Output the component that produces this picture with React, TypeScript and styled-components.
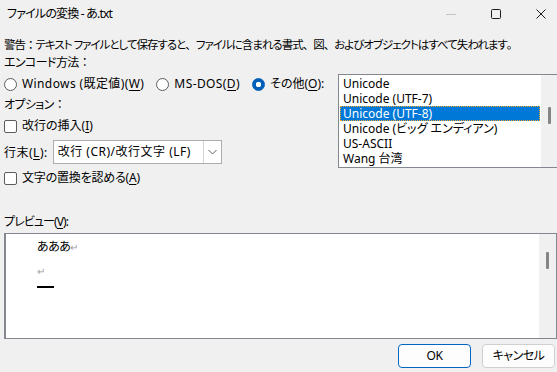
import React from 'react';
import styled, { createGlobalStyle } from 'styled-components';

const GlobalStyle = createGlobalStyle`
  html, body {
    margin: 0;
    padding: 0;
    background: #f0f0f0;
  }
`;

const Window = styled.div`
  width: 557px;
  height: 372px;
  overflow: hidden;
  background: #f0f0f0;
  color: #000;
  font-family: 'Noto Sans', 'Noto Sans CJK JP', sans-serif;
  font-size: 12px;
  font-feature-settings: 'palt';
  display: flex;
  flex-direction: column;
`;

const TitleBar = styled.div`
  height: 28px;
  flex: none;
  display: flex;
  align-items: center;
  justify-content: space-between;
  padding-left: 7px;
`;

const Title = styled.div`
  line-height: 16px;
  letter-spacing: -0.8px;
`;

const Controls = styled.div`
  display: flex;
  margin-right: -6px;
  height: 28px;
`;

const ControlButton = styled.div<{ $disabled?: boolean }>`
  width: 45px;
  height: 28px;
  display: flex;
  align-items: center;
  justify-content: center;
  color: ${(p) => (p.$disabled ? '#c4c4c4' : '#1a1a1a')};
`;

const Body = styled.div`
  flex: 1;
  display: flex;
  flex-direction: column;
  padding-left: 4px;
`;

const Line = styled.div<{ $top?: number; $tight?: number; $size?: number }>`
  line-height: 16px;
  height: 16px;
  flex: none;
  white-space: nowrap;
  margin-top: ${(p) => p.$top ?? 0}px;
  letter-spacing: ${(p) => p.$tight ?? -0.6}px;
  font-size: ${(p) => p.$size ?? 12}px;
`;

/* full-width punctuation: Yu Gothic UI keeps these wide while kana are proportional */
const Wide = styled.span`
  font-feature-settings: normal;
`;

const Key = styled.span`
  text-decoration: underline;
  text-underline-offset: 2px;
`;

const EncodingRow = styled.div`
  display: flex;
  margin-top: 3px;
`;

const LeftColumn = styled.div`
  width: 334px;
  flex: none;
  display: flex;
  flex-direction: column;
  padding-top: 2px;
`;

const RadioRow = styled.div`
  display: flex;
  align-items: center;
  gap: 12px;
  height: 16px;
`;

const Option = styled.label`
  display: flex;
  align-items: center;
  gap: 5px;
  height: 16px;
  line-height: 16px;
  white-space: nowrap;
`;

const OptionText = styled.span<{ $tight?: number }>`
  letter-spacing: ${(p) => p.$tight ?? 0}px;
`;

const RadioCircle = styled.span<{ $checked?: boolean }>`
  width: 13px;
  height: 13px;
  box-sizing: border-box;
  border-radius: 50%;
  border: 1px solid ${(p) => (p.$checked ? '#005fb8' : '#5c5c5c')};
  background: ${(p) =>
    p.$checked
      ? 'radial-gradient(circle, #fff 0 2.5px, #005fb8 3px)'
      : '#fff'};
  flex: none;
`;

const CheckRow = styled.div<{ $top: number }>`
  display: flex;
  margin-top: ${(p) => p.$top}px;
  height: 16px;
`;

const CheckBox = styled.span`
  width: 13px;
  height: 13px;
  box-sizing: border-box;
  border-radius: 2px;
  border: 1px solid #5c5c5c;
  background: #fff;
  flex: none;
`;

const EolRow = styled.div`
  display: flex;
  align-items: center;
  gap: 5px;
  margin-top: 6px;
  height: 24px;
  white-space: nowrap;
`;

const EolLabel = styled.span`
  letter-spacing: 0.5px;
`;

const Combo = styled.div`
  width: 169px;
  height: 24px;
  box-sizing: border-box;
  border: 1px solid #adadad;
  background: #fff;
  display: flex;
  align-items: center;
`;

const ComboText = styled.div`
  flex: 1;
  padding-left: 4px;
  line-height: 16px;
  letter-spacing: 0.5px;
`;

const ComboArrow = styled.div`
  width: 17px;
  height: 22px;
  border-left: 1px solid #d5d5d5;
  background: #fff;
  display: flex;
  align-items: center;
  justify-content: center;
`;

const ListBox = styled.div`
  width: 221px;
  height: 94px;
  box-sizing: border-box;
  border: 1px solid #828790;
  background: #fff;
  display: flex;
  flex: none;
`;

const ListItems = styled.div`
  flex: 1;
  padding: 1px 1px 0 1px;
  overflow: hidden;
`;

const ListItem = styled.div<{ $selected?: boolean }>`
  height: 15px;
  line-height: 15px;
  padding-left: 3px;
  white-space: nowrap;
  box-sizing: border-box;
  background: ${(p) => (p.$selected ? '#0078d7' : 'transparent')};
  color: ${(p) => (p.$selected ? '#fff' : '#000')};
  outline: ${(p) => (p.$selected ? '1px dotted #f5a623' : 'none')};
  outline-offset: -1px;
`;

const ScrollTrack = styled.div<{ $thumbTop: number }>`
  width: 17px;
  background: #f0f0f0;
  position: relative;
  flex: none;

  &::after {
    content: '';
    position: absolute;
    left: 7px;
    top: ${(p) => p.$thumbTop}px;
    width: 3px;
    height: 17px;
    background: #858585;
    border-radius: 1px;
  }
`;

const Preview = styled.div`
  margin-top: 3px;
  height: 106px;
  flex: none;
  box-sizing: border-box;
  border: 1px solid #828790;
  border-left-width: 2px;
  border-right: none;
  background: #fff;
  display: flex;
`;

const PreviewText = styled.div`
  flex: 1;
  padding: 4px 0 0 31px;
  font-family: 'Noto Sans CJK JP', sans-serif;
`;

const PreviewLine = styled.div<{ $h: number }>`
  height: ${(p) => p.$h}px;
  line-height: 16px;
  letter-spacing: -0.6px;
`;

const Return = styled.span`
  color: #a0a0a0;
  font-size: 10px;
`;

const Caret = styled.div`
  width: 17px;
  height: 2px;
  background: #000;
  margin-top: 8px;
`;

const PreviewScroll = styled(ScrollTrack)`
  border-right: 1px solid #828790;
`;

const Buttons = styled.div`
  display: flex;
  justify-content: flex-end;
  gap: 11px;
  margin-top: 5px;
  padding-right: 2px;
`;

const Button = styled.div<{ $primary?: boolean }>`
  width: 73px;
  height: 24px;
  box-sizing: border-box;
  border-radius: 4px;
  border: 1px solid ${(p) => (p.$primary ? '#0067c0' : '#d0d0d0')};
  background: #fdfdfd;
  display: flex;
  align-items: center;
  justify-content: center;
  line-height: 16px;
  letter-spacing: -0.5px;
`;

const encodings = [
  'Unicode',
  'Unicode (UTF-7)',
  'Unicode (UTF-8)',
  'Unicode (ビッグ エンディアン)',
  'US-ASCII',
  'Wang 台湾',
];

const App: React.FC = () => {
  return (
    <Window>
      <GlobalStyle />
      <TitleBar>
        <Title>ファイルの変換 - あ.txt</Title>
        <Controls>
          <ControlButton $disabled>
            <svg width="10" height="10" viewBox="0 0 10 10">
              <path d="M0 5.5h10" stroke="currentColor" strokeWidth="1" />
            </svg>
          </ControlButton>
          <ControlButton>
            <svg width="10" height="10" viewBox="0 0 10 10">
              <rect x="0.5" y="0.5" width="9" height="9" rx="1" fill="none" stroke="currentColor" />
            </svg>
          </ControlButton>
          <ControlButton>
            <svg width="10" height="10" viewBox="0 0 10 10">
              <path d="M0.5 0.5l9 9M9.5 0.5l-9 9" stroke="currentColor" strokeWidth="1" />
            </svg>
          </ControlButton>
        </Controls>
      </TitleBar>

      <Body>
        <Line $top={9} $tight={-1} $size={11.5}>
          警告<Wide>：</Wide>テキスト ファイルとして保存すると<Wide>、</Wide>ファイルに含まれる書式
          <Wide>、</Wide>図<Wide>、</Wide>およびオブジェクトはすべて失われます<Wide>。</Wide>
        </Line>
        <Line $top={2}>
          エンコード方法<Wide>：</Wide>
        </Line>

        <EncodingRow>
          <LeftColumn>
            <RadioRow>
              <Option>
                <RadioCircle />
                <OptionText $tight={0.4}>
                  Windows (既定値)(<Key>W</Key>)
                </OptionText>
              </Option>
              <Option>
                <RadioCircle />
                <OptionText $tight={0.4}>
                  MS-DOS(<Key>D</Key>)
                </OptionText>
              </Option>
              <Option>
                <RadioCircle $checked />
                <OptionText>
                  その他(<Key>O</Key>):
                </OptionText>
              </Option>
            </RadioRow>
            <Line $top={5}>
              オプション<Wide>：</Wide>
            </Line>
            <CheckRow $top={5}>
              <Option>
                <CheckBox />
                <OptionText>
                  改行の挿入(<Key>I</Key>)
                </OptionText>
              </Option>
            </CheckRow>
            <EolRow>
              <EolLabel>
                行末(<Key>L</Key>):
              </EolLabel>
              <Combo>
                <ComboText>改行 (CR)/改行文字 (LF)</ComboText>
                <ComboArrow>
                  <svg width="9" height="6" viewBox="0 0 9 6">
                    <path d="M0.5 1l4 4 4-4" fill="none" stroke="#606060" strokeWidth="1" />
                  </svg>
                </ComboArrow>
              </Combo>
            </EolRow>
            <CheckRow $top={6}>
              <Option>
                <CheckBox />
                <OptionText $tight={-0.2}>
                  文字の置換を認める(<Key>A</Key>)
                </OptionText>
              </Option>
            </CheckRow>
          </LeftColumn>

          <ListBox>
            <ListItems>
              {encodings.map((e, i) => (
                <ListItem key={e} $selected={i === 2}>
                  {e}
                </ListItem>
              ))}
            </ListItems>
            <ScrollTrack $thumbTop={32} />
          </ListBox>
        </EncodingRow>

        <Line $top={28} $tight={-0.9}>
          プレビュー(<Key>V</Key>):
        </Line>

        <Preview>
          <PreviewText>
            <PreviewLine $h={24}>
              あああ<Return>↵</Return>
            </PreviewLine>
            <PreviewLine $h={16}>
              <Return>↵</Return>
            </PreviewLine>
            <Caret />
          </PreviewText>
          <PreviewScroll $thumbTop={18} />
        </Preview>

        <Buttons>
          <Button $primary>OK</Button>
          <Button>キャンセル</Button>
        </Buttons>
      </Body>
    </Window>
  );
};

export default App;
